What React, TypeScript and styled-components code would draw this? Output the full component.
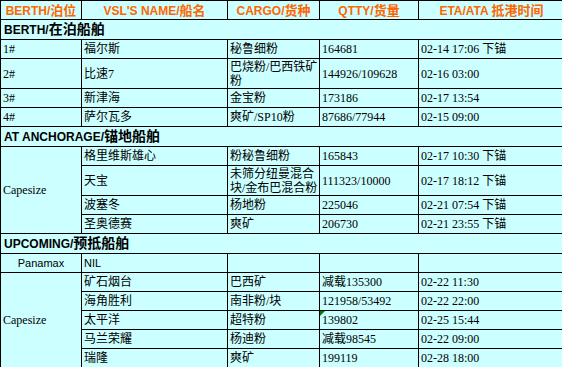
import React from 'react';
import styled, { createGlobalStyle } from 'styled-components';

const GlobalStyle = createGlobalStyle`
  html, body {
    margin: 0;
    padding: 0;
    background: #ccffff;
    overflow: hidden;
  }
`;

const Sheet = styled.table`
  border-collapse: collapse;
  table-layout: fixed;
  width: 564px;
  background: #ccffff;
  color: #000;
  font-family: "Liberation Serif", "Noto Sans CJK SC", serif;
  font-size: 12px;
`;

const HeadRow = styled.tr`
  height: 19px;
`;

const HeadCell = styled.th`
  border: 1px solid #000;
  padding: 0 2px;
  color: #ff6600;
  font-family: "Liberation Sans", "Noto Sans CJK SC", sans-serif;
  font-size: 12px;
  line-height: 15px;
  font-weight: bold;
  text-align: center;
  vertical-align: middle;
  white-space: nowrap;
  overflow: hidden;
`;

const Zh = styled.span<{ $size?: number }>`
  font-family: "Noto Sans CJK SC", sans-serif;
  font-size: ${(p) => p.$size || 13}px;
  line-height: 15px;
  font-weight: bold;
`;

const SectionRow = styled.tr`
  height: 20px;
`;

const SectionCell = styled.td`
  border: 1px solid #000;
  padding: 0 3px;
  font-family: "Liberation Sans", "Noto Sans CJK SC", sans-serif;
  font-size: 12px;
  line-height: 15px;
  font-weight: bold;
  vertical-align: middle;
  white-space: nowrap;
`;

const Row = styled.tr<{ $tall?: boolean }>`
  height: ${(p) => (p.$tall ? 30 : 19)}px;
`;

const Cell = styled.td<{ $sans?: boolean; $center?: boolean; $flag?: boolean }>`
  position: relative;
  border: 1px solid #000;
  padding: 0 2px;
  vertical-align: middle;
  white-space: nowrap;
  overflow: hidden;
  line-height: 14px;
  text-align: ${(p) => (p.$center ? 'center' : 'left')};
  font-family: ${(p) => (p.$sans
    ? '"Liberation Sans", "Noto Sans CJK SC", sans-serif'
    : '"Liberation Serif", "Noto Sans CJK SC", serif')};
  font-size: ${(p) => (p.$sans ? 11 : 12)}px;

  &::before {
    content: '';
    display: ${(p) => (p.$flag ? 'block' : 'none')};
    position: absolute;
    left: 0;
    top: 0;
    width: 0;
    height: 0;
    border-top: 5px solid #008000;
    border-right: 5px solid transparent;
  }
`;

type Ship = {
  name: string;
  cargo: React.ReactNode;
  qty: string;
  eta: string;
  tall?: boolean;
  flag?: boolean;
  sans?: boolean;
};

type Group = {
  label: string;
  center?: boolean;
  sans?: boolean;
  ships: Ship[];
};

type Section = {
  en: string;
  zh: string;
  groups: Group[];
};

const sections: Section[] = [
  {
    en: 'BERTH/',
    zh: '在泊船舶',
    groups: [
      { label: '1#', ships: [{ name: '福尔斯', cargo: '秘鲁细粉', qty: '164681', eta: '02-14 17:06 下锚' }] },
      {
        label: '2#',
        ships: [{
          name: '比速7',
          cargo: (<>巴烧粉/巴西铁矿<br />粉</>),
          qty: '144926/109628',
          eta: '02-16 03:00',
          tall: true,
        }],
      },
      { label: '3#', ships: [{ name: '新津海', cargo: '金宝粉', qty: '173186', eta: '02-17 13:54' }] },
      { label: '4#', ships: [{ name: '萨尔瓦多', cargo: '爽矿/SP10粉', qty: '87686/77944', eta: '02-15 09:00' }] },
    ],
  },
  {
    en: 'AT ANCHORAGE/',
    zh: '锚地船舶',
    groups: [
      {
        label: 'Capesize',
        ships: [
          { name: '格里维斯雄心', cargo: '粉秘鲁细粉', qty: '165843', eta: '02-17 10:30 下锚' },
          {
            name: '天宝',
            cargo: (<>未筛分纽曼混合<br />块/金布巴混合粉</>),
            qty: '111323/10000',
            eta: '02-17 18:12 下锚',
            tall: true,
          },
          { name: '波塞冬', cargo: '杨地粉', qty: '225046', eta: '02-21 07:54 下锚' },
          { name: '圣奥德赛', cargo: '爽矿', qty: '206730', eta: '02-21 23:55 下锚' },
        ],
      },
    ],
  },
  {
    en: 'UPCOMING/',
    zh: '预抵船舶',
    groups: [
      {
        label: 'Panamax',
        center: true,
        sans: true,
        ships: [{ name: 'NIL', cargo: '', qty: '', eta: '', sans: true }],
      },
      {
        label: 'Capesize',
        ships: [
          { name: '矿石烟台', cargo: '巴西矿', qty: '减载135300', eta: '02-22 11:30' },
          { name: '海角胜利', cargo: '南非粉/块', qty: '121958/53492', eta: '02-22 22:00' },
          { name: '太平洋', cargo: '超特粉', qty: '139802', eta: '02-25 15:44', flag: true },
          { name: '马兰荣耀', cargo: '杨迪粉', qty: '减载98545', eta: '02-22 09:00' },
          { name: '瑞隆', cargo: '爽矿', qty: '199119', eta: '02-28 18:00' },
        ],
      },
    ],
  },
];

const App = () => {
  return (
    <>
      <GlobalStyle />
      <Sheet>
        <colgroup>
          <col style={{ width: 81 }} />
          <col style={{ width: 146 }} />
          <col style={{ width: 92 }} />
          <col style={{ width: 99 }} />
          <col style={{ width: 146 }} />
        </colgroup>
        <tbody>
          <HeadRow>
            <HeadCell>BERTH/<Zh>泊位</Zh></HeadCell>
            <HeadCell>VSL&apos;S NAME/<Zh>船名</Zh></HeadCell>
            <HeadCell>CARGO/<Zh>货种</Zh></HeadCell>
            <HeadCell>QTTY/<Zh>货量</Zh></HeadCell>
            <HeadCell>ETA/ATA <Zh>抵港时间</Zh></HeadCell>
          </HeadRow>
          {sections.map((section) => (
            <React.Fragment key={section.en}>
              <SectionRow>
                <SectionCell colSpan={5}>
                  {section.en}
                  <Zh $size={14}>{section.zh}</Zh>
                </SectionCell>
              </SectionRow>
              {section.groups.map((group) => group.ships.map((ship, i) => (
                <Row key={`${group.label}-${ship.name}`} $tall={ship.tall}>
                  {i === 0 && (
                    <Cell rowSpan={group.ships.length} $center={group.center} $sans={group.sans}>
                      {group.label}
                    </Cell>
                  )}
                  <Cell $sans={ship.sans}>{ship.name}</Cell>
                  <Cell>{ship.cargo}</Cell>
                  <Cell $flag={ship.flag}>{ship.qty}</Cell>
                  <Cell>{ship.eta}</Cell>
                </Row>
              )))}
            </React.Fragment>
          ))}
        </tbody>
      </Sheet>
    </>
  );
};

export default App;
